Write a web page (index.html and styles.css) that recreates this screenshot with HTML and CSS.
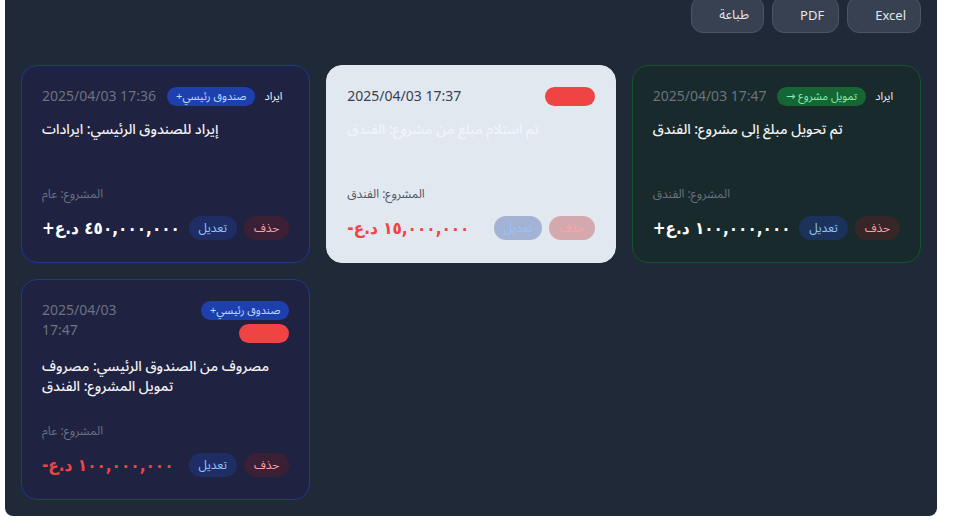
FILE: index.html
```html
<!DOCTYPE html>
<html lang="ar">
<head>
<meta charset="utf-8">
<title>المعاملات</title>
<link rel="stylesheet" href="styles.css">
</head>
<body>
<div class="panel">
  <div class="toolbar">
    <button class="tool-btn">طباعة</button>
    <button class="tool-btn">PDF</button>
    <button class="tool-btn">Excel</button>
  </div>
  <div class="grid">
    <div class="card card-blue">
      <div class="card-head">
        <div class="date">2025/04/03 17:36</div>
        <div class="badges">
          <span class="badge badge-blue" dir="rtl">صندوق رئيسي+</span>
          <span class="badge badge-plain">ايراد</span>
        </div>
      </div>
      <div class="title">إيراد للصندوق الرئيسي: ايرادات</div>
      <div class="project">المشروع: عام</div>
      <div class="card-foot">
        <div class="amount amount-pos">+٤٥٠,٠٠٠,٠٠٠ د.ع</div>
        <div class="actions">
          <button class="act act-edit">تعديل</button>
          <button class="act act-del">حذف</button>
        </div>
      </div>
    </div>

    <div class="card card-light">
      <div class="card-head">
        <div class="date">2025/04/03 17:37</div>
        <div class="badges">
          <span class="badge badge-red"></span>
        </div>
      </div>
      <div class="title">تم استلام مبلغ من مشروع: الفندق</div>
      <div class="project">المشروع: الفندق</div>
      <div class="card-foot">
        <div class="amount amount-neg">-١٥,٠٠٠,٠٠٠ د.ع</div>
        <div class="actions">
          <button class="act act-edit">تعديل</button>
          <button class="act act-del">حذف</button>
        </div>
      </div>
    </div>

    <div class="card card-green">
      <div class="card-head">
        <div class="date">2025/04/03 17:47</div>
        <div class="badges">
          <span class="badge badge-green" dir="rtl">تمويل مشروع →</span>
          <span class="badge badge-plain">ايراد</span>
        </div>
      </div>
      <div class="title">تم تحويل مبلغ إلى مشروع: الفندق</div>
      <div class="project">المشروع: الفندق</div>
      <div class="card-foot">
        <div class="amount amount-pos">+١٠٠,٠٠٠,٠٠٠ د.ع</div>
        <div class="actions">
          <button class="act act-edit">تعديل</button>
          <button class="act act-del">حذف</button>
        </div>
      </div>
    </div>

    <div class="card card-blue">
      <div class="card-head">
        <div class="date">2025/04/03 17:47</div>
        <div class="badges">
          <span class="badge badge-blue" dir="rtl">صندوق رئيسي+</span>
          <span class="badge badge-red"></span>
        </div>
      </div>
      <div class="title">مصروف من الصندوق الرئيسي: مصروف تمويل المشروع: الفندق</div>
      <div class="project">المشروع: عام</div>
      <div class="card-foot">
        <div class="amount amount-neg">-١٠٠,٠٠٠,٠٠٠ د.ع</div>
        <div class="actions">
          <button class="act act-edit">تعديل</button>
          <button class="act act-del">حذف</button>
        </div>
      </div>
    </div>
  </div>
</div>
</body>
</html>
```

FILE: styles.css
```css
* { box-sizing: border-box; }

html, body {
  margin: 0;
  padding: 0;
  background: #ffffff;
}

body {
  font-family: "Noto Sans", "Noto Sans Arabic", "DejaVu Sans", sans-serif;
  overflow: hidden;
}

.panel {
  width: 932px;
  margin-left: 5px;
  background: #1f2937;
  padding: 0 16px 16px;
  border-radius: 0 0 8px 8px;
}

.toolbar {
  display: flex;
  justify-content: flex-end;
  gap: 8px;
  margin-top: -4px;
  margin-bottom: 32px;
}

.tool-btn {
  height: 37px;
  padding: 0 14px 0 27px;
  background: #374151;
  border: 1px solid #4b5563;
  border-radius: 12px;
  color: #e5e7eb;
  font-family: inherit;
  font-size: 13px;
}

.grid {
  display: grid;
  grid-template-columns: repeat(3, 1fr);
  gap: 16px;
  align-items: start;
}

.card {
  border: 1px solid;
  border-radius: 16px;
  padding: 20px;
  display: flex;
  flex-direction: column;
}

.card-blue {
  background: #1f2240;
  border-color: #1e3a8a;
}

.card-green {
  background: #182a2b;
  border-color: #14532d;
}

.card-light {
  background: #e2e8f0;
  border-color: #e2e8f0;
}

.card-head {
  display: flex;
  justify-content: space-between;
  align-items: flex-start;
  gap: 8px;
  margin-bottom: 13px;
}

.date {
  font-size: 14px;
  line-height: 20px;
  color: #6b7280;
}

.card-light .date { color: #374151; }

.badges {
  display: flex;
  flex-wrap: wrap;
  justify-content: flex-end;
  align-items: center;
  gap: 4px 2px;
  padding-top: 1px;
}

.badge {
  display: inline-flex;
  align-items: center;
  height: 19px;
  padding: 0 9px;
  border-radius: 999px;
  font-size: 11px;
  white-space: nowrap;
}

.badge-blue { background: #1e40af; color: #bfdbfe; }
.badge-green { background: #166534; color: #86efac; }
.badge-red { background: #ef4444; width: 50px; }
.badge-plain { color: #f9fafb; padding: 0 7px; }

.title {
  font-size: 14px;
  line-height: 20px;
  min-height: 48px;
  margin-bottom: 19px;
  color: #f3f4f6;
  font-weight: 500;
}

.card-light .title { color: #f1f5f9; }

.project {
  font-size: 12px;
  line-height: 16px;
  color: #6b7280;
}

.card-light .project { color: #4b5563; }

.card-foot {
  margin-top: 12px;
  height: 28px;
  display: flex;
  justify-content: space-between;
  align-items: center;
}

.amount {
  font-family: "DejaVu Sans Condensed", "Noto Sans Arabic", sans-serif;
  font-size: 17px;
  line-height: 28px;
  font-weight: 700;
}

.amount-pos { color: #ffffff; }
.amount-neg { color: #ef4444; }

.actions {
  display: flex;
  gap: 7px;
}

.act {
  height: 24px;
  padding: 0 10px;
  border: none;
  border-radius: 999px;
  font-family: inherit;
  font-size: 12px;
}

.act-edit { background: rgba(30, 58, 138, 0.5); color: #93c5fd; }
.act-del { background: rgba(127, 29, 29, 0.3); color: #fca5a5; }

.card-light .act-edit { background: #a4b3d4; color: #93c5fd; }
.card-light .act-del { background: #d3a9ae; color: #fca5a5; }
```
